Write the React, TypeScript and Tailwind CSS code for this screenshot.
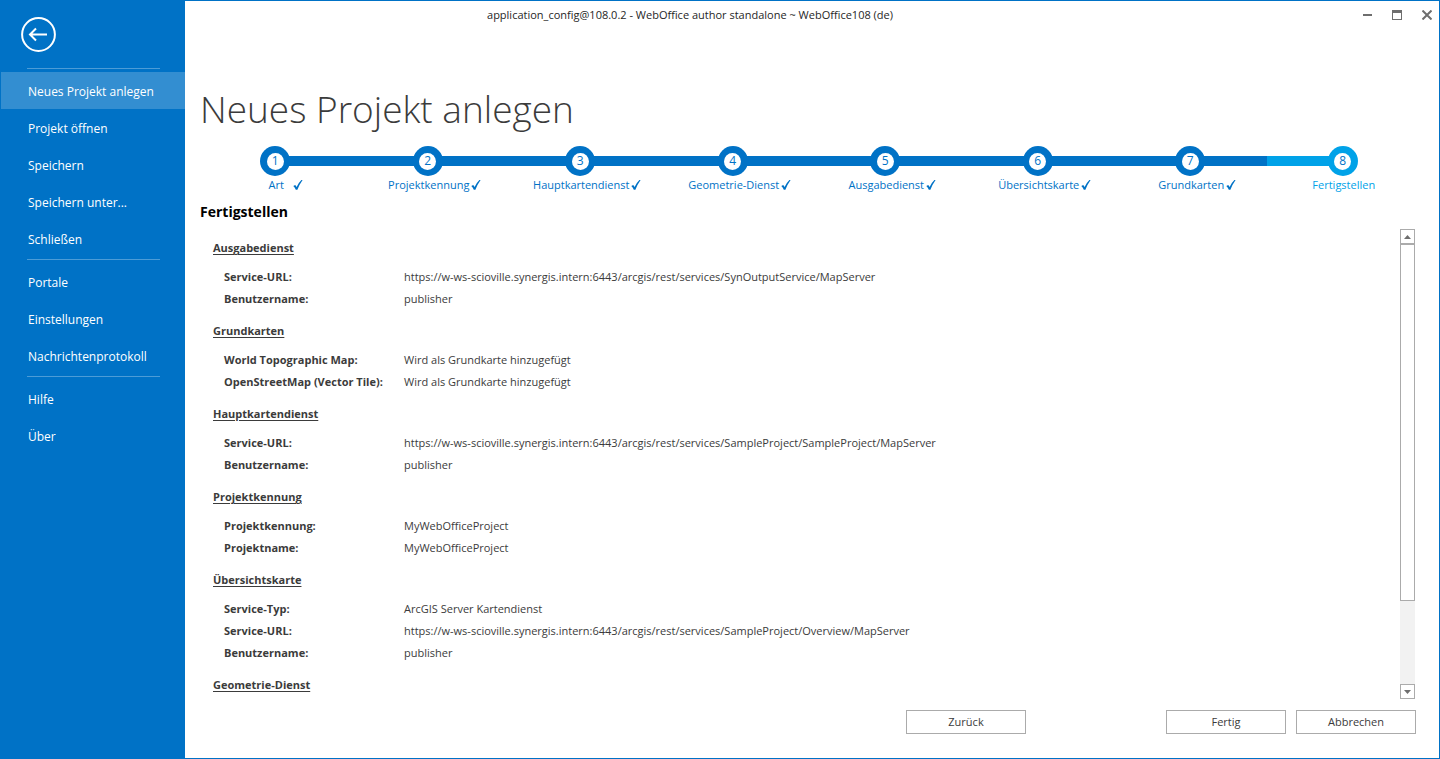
import React from 'react';

type Step = { label: string; done: boolean };
type Section = { title: string; rows: [string, string][] };

const menuGroups: string[][] = [
  ["Neues Projekt anlegen", "Projekt öffnen", "Speichern", "Speichern unter...", "Schließen"],
  ["Portale", "Einstellungen", "Nachrichtenprotokoll"],
  ["Hilfe", "Über"],
];

const steps: Step[] = [
  { label: "Art", done: true },
  { label: "Projektkennung", done: true },
  { label: "Hauptkartendienst", done: true },
  { label: "Geometrie-Dienst", done: true },
  { label: "Ausgabedienst", done: true },
  { label: "Übersichtskarte", done: true },
  { label: "Grundkarten", done: true },
  { label: "Fertigstellen", done: false },
];

const sections: Section[] = [
  {
    title: "Ausgabedienst",
    rows: [
      ["Service-URL:", "https://w-ws-scioville.synergis.intern:6443/arcgis/rest/services/SynOutputService/MapServer"],
      ["Benutzername:", "publisher"],
    ],
  },
  {
    title: "Grundkarten",
    rows: [
      ["World Topographic Map:", "Wird als Grundkarte hinzugefügt"],
      ["OpenStreetMap (Vector Tile):", "Wird als Grundkarte hinzugefügt"],
    ],
  },
  {
    title: "Hauptkartendienst",
    rows: [
      ["Service-URL:", "https://w-ws-scioville.synergis.intern:6443/arcgis/rest/services/SampleProject/SampleProject/MapServer"],
      ["Benutzername:", "publisher"],
    ],
  },
  {
    title: "Projektkennung",
    rows: [
      ["Projektkennung:", "MyWebOfficeProject"],
      ["Projektname:", "MyWebOfficeProject"],
    ],
  },
  {
    title: "Übersichtskarte",
    rows: [
      ["Service-Typ:", "ArcGIS Server Kartendienst"],
      ["Service-URL:", "https://w-ws-scioville.synergis.intern:6443/arcgis/rest/services/SampleProject/Overview/MapServer"],
      ["Benutzername:", "publisher"],
    ],
  },
  { title: "Geometrie-Dienst", rows: [] },
];

const CheckMark = () => (
  <svg className="h-[10px] w-[10px]" viewBox="0 0 10 10" fill="currentColor" aria-hidden="true">
    <path d="M0.3 5.9 L2.2 5 Q3.1 6 3.6 7.1 Q5.6 2.6 8.4 0 L9.6 0 Q6.4 4.4 4.4 9.8 L2.8 9.8 Q2 7.6 0.3 5.9 Z" />
  </svg>
);

const Sidebar = () => (
  <aside className="flex w-[184px] shrink-0 flex-col bg-[#0072c6] text-white">
    <button type="button" className="mt-4 ml-5 h-[35px] w-[35px]" aria-label="Zurück zum Projekt">
      <svg className="h-full w-full" viewBox="0 0 35 35" fill="none" stroke="currentColor" strokeWidth="2">
        <circle cx="17.5" cy="17.5" r="16.4" />
        <path d="M26 17.5H10M15 11.5l-6 6 6 6" />
      </svg>
    </button>
    <nav className="mt-[14px]">
      {menuGroups.map((group, g) => (
        <div key={g}>
          <hr className="mt-0.5 mr-[25px] mb-[3px] ml-[26px] border-[#4c9cd7]" />
          <ul>
            {group.map((item, i) => (
              <li key={item}>
                <a
                  href="#"
                  className={`flex h-[37px] items-center pt-0.5 pl-[27px] text-xs whitespace-nowrap ${g === 0 && i === 0 ? "bg-[#338ed1]" : ""}`}
                >
                  {item}
                </a>
              </li>
            ))}
          </ul>
        </div>
      ))}
    </nav>
  </aside>
);

const TitleBar = () => (
  <header className="flex h-7 items-center text-[11px]">
    <div className="w-[10px] shrink-0" />
    <p className="flex-1 text-center text-[#262626]">
      application_config@108.0.2 - WebOffice author standalone ~ WebOffice108 (de)
    </p>
    <div className="flex w-[254px] shrink-0 justify-end gap-5 pr-[7px] text-[#6e6e6e]">
      <button type="button" aria-label="Minimieren">
        <svg className="h-[10px] w-[10px]" viewBox="0 0 10 10" fill="currentColor">
          <path d="M1 4h9v2H1z" />
        </svg>
      </button>
      <button type="button" aria-label="Maximieren">
        <svg className="h-[10px] w-[10px]" viewBox="0 0 10 10" fill="currentColor" shapeRendering="crispEdges">
          <path fillRule="evenodd" d="M0 0h10v10H0zM1 3h8v6H1z" />
        </svg>
      </button>
      <button type="button" aria-label="Schließen">
        <svg className="h-[10px] w-[10px]" viewBox="0 0 10 10" stroke="currentColor" strokeWidth="2">
          <path d="M0.5 0.5l9 9M9.5 0.5l-9 9" />
        </svg>
      </button>
    </div>
  </header>
);

const Stepper = () => (
  <ol className="grid grid-cols-8 text-[11px]">
    {steps.map((step, i) => (
      <li key={step.label} className={`flex flex-col items-center ${step.done ? "text-[#0072c6]" : "text-[#00a2e8]"}`}>
        <div className="flex w-full items-center">
          <span className={`h-[10px] flex-1 ${i > 0 ? "bg-current" : ""}`} />
          <span className="-mx-px flex h-[30px] w-[30px] items-center justify-center rounded-full bg-current">
            <span className="flex h-[17px] w-[17px] items-center justify-center rounded-full bg-white">
              <span className="text-xs text-[#0072c6]">{i + 1}</span>
            </span>
          </span>
          <span className={`h-[10px] flex-1 ${i < steps.length - 1 ? "bg-current" : ""}`} />
        </div>
        <span className="relative min-w-8 pl-0.5 text-center leading-[18px]">
          {step.label}
          {step.done && (
            <span className="absolute top-1 left-full pl-0.5">
              <CheckMark />
            </span>
          )}
        </span>
      </li>
    ))}
  </ol>
);

const ScrollBar = () => (
  <div className="flex w-[15px] shrink-0 flex-col bg-[#f2f2f2] text-[#6e6e6e]">
    <button type="button" aria-label="Nach oben" className="flex h-[15px] shrink-0 items-center justify-center border border-[#ababab] bg-white">
      <svg className="h-1 w-[7px]" viewBox="0 0 7 4" fill="currentColor">
        <path d="M3.5 0L7 4H0z" />
      </svg>
    </button>
    <div className="grow-[357] border border-[#ababab] bg-white" />
    <div className="grow-[83]" />
    <button type="button" aria-label="Nach unten" className="flex h-[15px] shrink-0 items-center justify-center border border-[#ababab] bg-white">
      <svg className="h-1 w-[7px]" viewBox="0 0 7 4" fill="currentColor">
        <path d="M0 0h7L3.5 4z" />
      </svg>
    </button>
  </div>
);

const Summary = () => (
  <div className="min-w-0 flex-1 overflow-hidden pt-[9px] pl-[13px] text-[11px] text-[#3b3b3b]">
    {sections.map((section) => (
      <section key={section.title} className="mb-[11px]">
        <h3 className="mb-2 leading-5 font-bold underline underline-offset-2">{section.title}</h3>
        <dl className="ml-[11px]">
          {section.rows.map(([name, value]) => (
            <div key={name} className="flex leading-[22px] whitespace-nowrap">
              <dt className="w-[180px] shrink-0 font-bold">{name}</dt>
              <dd>{value}</dd>
            </div>
          ))}
        </dl>
      </section>
    ))}
  </div>
);

const WizardButton = ({ label, className = "" }: { label: string; className?: string }) => (
  <button type="button" className={`h-6 w-[120px] border border-[#ababab] bg-white text-[11px] text-[#3b3b3b] ${className}`}>
    {label}
  </button>
);

export default function App() {
  return (
    <div className="flex h-screen border border-[#0072c6] bg-white font-['Open_Sans','Noto_Sans',sans-serif]">
      <Sidebar />
      <div className="flex min-w-0 flex-1 flex-col">
        <TitleBar />
        <main className="flex min-h-0 flex-1 flex-col pb-6 pl-[15px]">
          <h1 className="mt-[50px] text-[37px] leading-[60px] font-light text-[#3b3b3b]">Neues Projekt anlegen</h1>
          <div className="mt-[7px] mr-5 -ml-px">
            <Stepper />
          </div>
          <h2 className="mt-2 text-sm leading-5 font-bold text-black">Fertigstellen</h2>
          <div className="mt-[7px] mr-6 flex min-h-0 flex-1">
            <Summary />
            <ScrollBar />
          </div>
          <div className="mt-[11px] mr-[23px] flex justify-end gap-[10px]">
            <WizardButton label="Zurück" className="mr-[130px]" />
            <WizardButton label="Fertig" />
            <WizardButton label="Abbrechen" />
          </div>
        </main>
      </div>
    </div>
  );
}
